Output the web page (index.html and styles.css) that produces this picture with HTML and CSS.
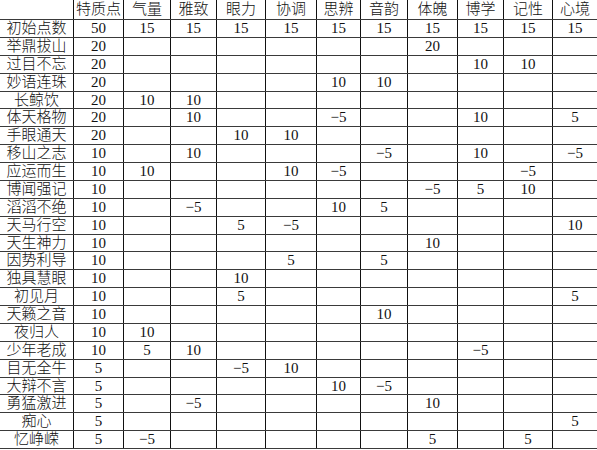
FILE: index.html
```html
<!DOCTYPE html>
<html lang="zh-CN">
<head>
<meta charset="utf-8">
<title>特质点</title>
<link rel="stylesheet" href="styles.css">
</head>
<body>
<div class="sheet">
  <div class="row head"><div class="c"></div><div class="c">特质点</div><div class="c">气量</div><div class="c">雅致</div><div class="c">眼力</div><div class="c">协调</div><div class="c">思辨</div><div class="c">音韵</div><div class="c">体魄</div><div class="c">博学</div><div class="c">记性</div><div class="c">心境</div></div>
  <div class="row"><div class="c">初始点数</div><div class="c">50</div><div class="c">15</div><div class="c">15</div><div class="c">15</div><div class="c">15</div><div class="c">15</div><div class="c">15</div><div class="c">15</div><div class="c">15</div><div class="c">15</div><div class="c">15</div></div>
  <div class="row"><div class="c">举鼎拔山</div><div class="c">20</div><div class="c"></div><div class="c"></div><div class="c"></div><div class="c"></div><div class="c"></div><div class="c"></div><div class="c">20</div><div class="c"></div><div class="c"></div><div class="c"></div></div>
  <div class="row"><div class="c">过目不忘</div><div class="c">20</div><div class="c"></div><div class="c"></div><div class="c"></div><div class="c"></div><div class="c"></div><div class="c"></div><div class="c"></div><div class="c">10</div><div class="c">10</div><div class="c"></div></div>
  <div class="row"><div class="c">妙语连珠</div><div class="c">20</div><div class="c"></div><div class="c"></div><div class="c"></div><div class="c"></div><div class="c">10</div><div class="c">10</div><div class="c"></div><div class="c"></div><div class="c"></div><div class="c"></div></div>
  <div class="row"><div class="c">长鲸饮</div><div class="c">20</div><div class="c">10</div><div class="c">10</div><div class="c"></div><div class="c"></div><div class="c"></div><div class="c"></div><div class="c"></div><div class="c"></div><div class="c"></div><div class="c"></div></div>
  <div class="row"><div class="c">体天格物</div><div class="c">20</div><div class="c"></div><div class="c">10</div><div class="c"></div><div class="c"></div><div class="c">−5</div><div class="c"></div><div class="c"></div><div class="c">10</div><div class="c"></div><div class="c">5</div></div>
  <div class="row"><div class="c">手眼通天</div><div class="c">20</div><div class="c"></div><div class="c"></div><div class="c">10</div><div class="c">10</div><div class="c"></div><div class="c"></div><div class="c"></div><div class="c"></div><div class="c"></div><div class="c"></div></div>
  <div class="row"><div class="c">移山之志</div><div class="c">10</div><div class="c"></div><div class="c">10</div><div class="c"></div><div class="c"></div><div class="c"></div><div class="c">−5</div><div class="c"></div><div class="c">10</div><div class="c"></div><div class="c">−5</div></div>
  <div class="row"><div class="c">应运而生</div><div class="c">10</div><div class="c">10</div><div class="c"></div><div class="c"></div><div class="c">10</div><div class="c">−5</div><div class="c"></div><div class="c"></div><div class="c"></div><div class="c">−5</div><div class="c"></div></div>
  <div class="row"><div class="c">博闻强记</div><div class="c">10</div><div class="c"></div><div class="c"></div><div class="c"></div><div class="c"></div><div class="c"></div><div class="c"></div><div class="c">−5</div><div class="c">5</div><div class="c">10</div><div class="c"></div></div>
  <div class="row"><div class="c">滔滔不绝</div><div class="c">10</div><div class="c"></div><div class="c">−5</div><div class="c"></div><div class="c"></div><div class="c">10</div><div class="c">5</div><div class="c"></div><div class="c"></div><div class="c"></div><div class="c"></div></div>
  <div class="row"><div class="c">天马行空</div><div class="c">10</div><div class="c"></div><div class="c"></div><div class="c">5</div><div class="c">−5</div><div class="c"></div><div class="c"></div><div class="c"></div><div class="c"></div><div class="c"></div><div class="c">10</div></div>
  <div class="row"><div class="c">天生神力</div><div class="c">10</div><div class="c"></div><div class="c"></div><div class="c"></div><div class="c"></div><div class="c"></div><div class="c"></div><div class="c">10</div><div class="c"></div><div class="c"></div><div class="c"></div></div>
  <div class="row"><div class="c">因势利导</div><div class="c">10</div><div class="c"></div><div class="c"></div><div class="c"></div><div class="c">5</div><div class="c"></div><div class="c">5</div><div class="c"></div><div class="c"></div><div class="c"></div><div class="c"></div></div>
  <div class="row"><div class="c">独具慧眼</div><div class="c">10</div><div class="c"></div><div class="c"></div><div class="c">10</div><div class="c"></div><div class="c"></div><div class="c"></div><div class="c"></div><div class="c"></div><div class="c"></div><div class="c"></div></div>
  <div class="row"><div class="c">初见月</div><div class="c">10</div><div class="c"></div><div class="c"></div><div class="c">5</div><div class="c"></div><div class="c"></div><div class="c"></div><div class="c"></div><div class="c"></div><div class="c"></div><div class="c">5</div></div>
  <div class="row"><div class="c">天籁之音</div><div class="c">10</div><div class="c"></div><div class="c"></div><div class="c"></div><div class="c"></div><div class="c"></div><div class="c">10</div><div class="c"></div><div class="c"></div><div class="c"></div><div class="c"></div></div>
  <div class="row"><div class="c">夜归人</div><div class="c">10</div><div class="c">10</div><div class="c"></div><div class="c"></div><div class="c"></div><div class="c"></div><div class="c"></div><div class="c"></div><div class="c"></div><div class="c"></div><div class="c"></div></div>
  <div class="row"><div class="c">少年老成</div><div class="c">10</div><div class="c">5</div><div class="c">10</div><div class="c"></div><div class="c"></div><div class="c"></div><div class="c"></div><div class="c"></div><div class="c">−5</div><div class="c"></div><div class="c"></div></div>
  <div class="row"><div class="c">目无全牛</div><div class="c">5</div><div class="c"></div><div class="c"></div><div class="c">−5</div><div class="c">10</div><div class="c"></div><div class="c"></div><div class="c"></div><div class="c"></div><div class="c"></div><div class="c"></div></div>
  <div class="row"><div class="c">大辩不言</div><div class="c">5</div><div class="c"></div><div class="c"></div><div class="c"></div><div class="c"></div><div class="c">10</div><div class="c">−5</div><div class="c"></div><div class="c"></div><div class="c"></div><div class="c"></div></div>
  <div class="row"><div class="c">勇猛激进</div><div class="c">5</div><div class="c"></div><div class="c">−5</div><div class="c"></div><div class="c"></div><div class="c"></div><div class="c"></div><div class="c">10</div><div class="c"></div><div class="c"></div><div class="c"></div></div>
  <div class="row"><div class="c">痴心</div><div class="c">5</div><div class="c"></div><div class="c"></div><div class="c"></div><div class="c"></div><div class="c"></div><div class="c"></div><div class="c"></div><div class="c"></div><div class="c"></div><div class="c">5</div></div>
  <div class="row"><div class="c">忆峥嵘</div><div class="c">5</div><div class="c">−5</div><div class="c"></div><div class="c"></div><div class="c"></div><div class="c"></div><div class="c"></div><div class="c">5</div><div class="c"></div><div class="c">5</div><div class="c"></div></div>
</div>
</body>
</html>
```
FILE: styles.css
```css
html, body {
  margin: 0;
  padding: 0;
  background: #fff;
}

.sheet {
  width: 597px;
  font-family: "Liberation Serif", "Noto Sans CJK SC", serif;
  font-size: 15px;
  font-weight: 300;
  color: #111;
}

.row {
  display: grid;
  grid-template-columns: 74px 50px 47px 46px 49px 51px 44px 47px 50px 46px 49px 44px;
  box-sizing: border-box;
  height: 17.875px;
  line-height: 16.875px;
  border-bottom: 1px solid #3a3a3a;
}

.row.head {
  height: 20px;
  line-height: 19px;
}

.c {
  box-sizing: border-box;
  border-right: 1px solid #111;
  text-align: center;
  white-space: nowrap;
  overflow: hidden;
}

.c:last-child {
  border-right: none;
}
```
